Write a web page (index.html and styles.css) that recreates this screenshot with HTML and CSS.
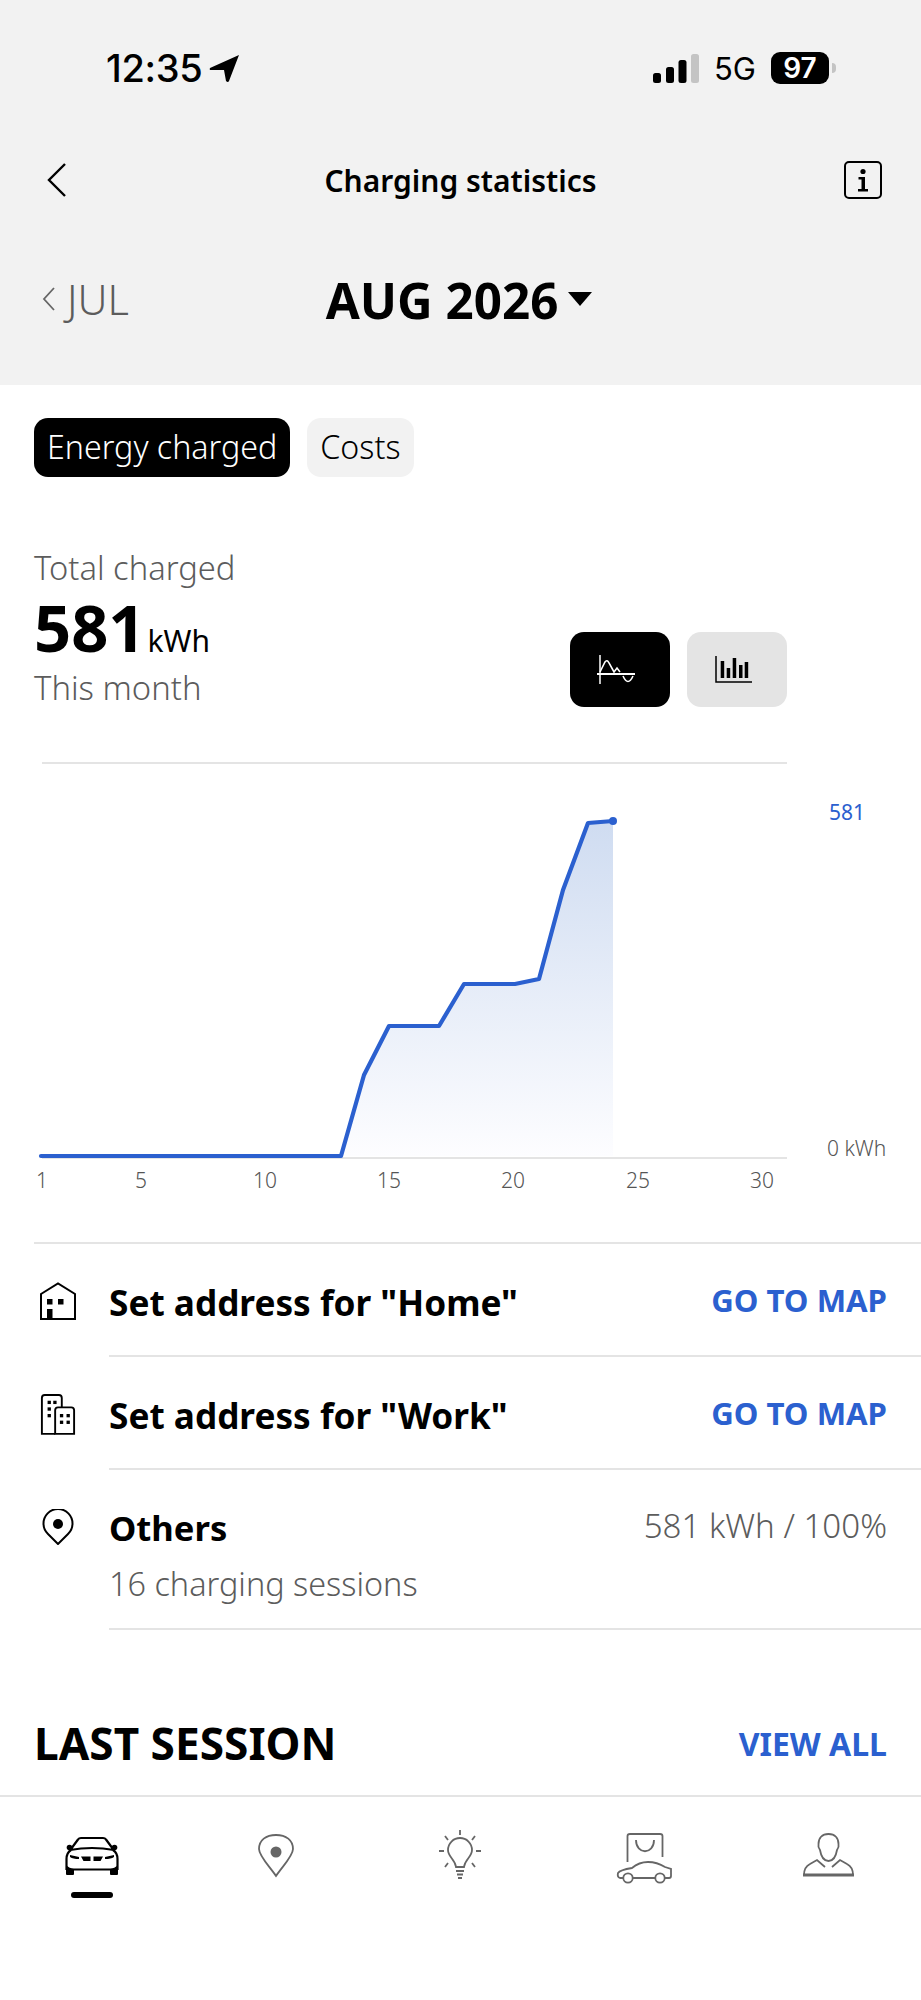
FILE: index.html
```html
<!DOCTYPE html>
<html lang="en">
<head>
    <meta charset="UTF-8">
    <title>Charging statistics</title>
    <link rel="stylesheet" href="styles.css">
</head>
<body>
    <div class="page">
        <header class="top">
            <div class="status">
                <div class="status-left">
                    <span class="time">12:35</span>
                    <svg class="arrow" width="31" height="29" viewBox="0 0 31 29"><path d="M30 1 L1 14 Q0 16 2 16 L15 16 L17 27 Q19 29 20 27 Z" fill="#000"/></svg>
                </div>
                <div class="status-right">
                    <svg width="46" height="29" viewBox="0 0 46 29">
                        <rect x="0" y="19" width="8" height="10" rx="2.500" fill="#000"/>
                        <rect x="13" y="13" width="8" height="16" rx="2.500" fill="#000"/>
                        <rect x="25.500" y="6" width="8" height="23" rx="2.500" fill="#000"/>
                        <rect x="38" y="0" width="8" height="29" rx="2.500" fill="#c4c4c4"/>
                    </svg>
                    <span class="net">5G</span>
                    <div class="battery"><span class="battery-num">97</span></div>
                    <span class="battery-nub"></span>
                </div>
            </div>
            <div class="nav">
                <svg class="back" width="20" height="34" viewBox="0 0 20 34"><path d="M18 1 L2 17 L18 33" fill="none" stroke="#000" stroke-width="2.400"/></svg>
                <h1 class="title">Charging statistics</h1>
                <svg class="info" width="38" height="38" viewBox="0 0 38 38">
                    <rect x="1" y="1" width="36" height="36" rx="4" fill="none" stroke="#000" stroke-width="2"/>
                    <circle cx="19" cy="10.500" r="2.600" fill="#000"/>
                    <path d="M14.500 16 H21 V28 H24 V30.500 H14 V28 H17.500 V18.500 H14.500 Z" fill="#000"/>
                </svg>
            </div>
            <div class="month">
                <div class="prev">
                    <svg width="13" height="24" viewBox="0 0 13 24"><path d="M12 1 L2 12 L12 23" fill="none" stroke="#666" stroke-width="1.800"/></svg>
                    <span>JUL</span>
                </div>
                <div class="current">
                    <span>AUG 2026</span>
                    <span class="caret"></span>
                </div>
            </div>
        </header>

        <div class="tabs">
            <span class="tab tab-on">Energy charged</span>
            <span class="tab">Costs</span>
        </div>

        <section class="summary">
            <div>
                <div class="sub">Total charged</div>
                <div class="total"><b>581</b><span>kWh</span></div>
                <div class="sub sub-month">This month</div>
            </div>
            <div class="toggles">
                <div class="toggle toggle-on">
                    <svg width="38" height="30" viewBox="0 0 38 30" fill="none" stroke="#fff">
                        <path d="M3 0 V29" stroke-width="1.500"/>
                        <path d="M0 19 H38" stroke-width="1.800"/>
                        <path d="M3 17 L8 7 Q10 4 12 8 L17 17 L20 13 L23 17" stroke-width="1.600"/>
                        <path d="M26 21 Q31 32 36 21" stroke-width="1.600"/>
                    </svg>
                </div>
                <div class="toggle toggle-off">
                    <svg width="37" height="27" viewBox="0 0 37 27" fill="#000">
                        <path d="M1 0 V26 H37" fill="none" stroke="#000" stroke-width="1.500"/>
                        <rect x="5.700" y="5" width="3.500" height="17"/>
                        <rect x="11.700" y="12" width="3.500" height="10"/>
                        <rect x="17.700" y="2" width="3.500" height="20"/>
                        <rect x="24" y="9" width="3.500" height="13"/>
                        <rect x="29.700" y="6" width="3.500" height="16"/>
                    </svg>
                </div>
            </div>
        </section>

        <svg class="chart" width="921" height="535" viewBox="0 707 921 535">
            <defs>
                <linearGradient id="areaFill" x1="0" y1="0" x2="0" y2="1">
                    <stop offset="0" stop-color="#cfdcf1"/>
                    <stop offset="1" stop-color="#fdfdff"/>
                </linearGradient>
            </defs>
            <line x1="42" y1="763" x2="787" y2="763" stroke="#e4e4e4" stroke-width="2"/>
            <line x1="42" y1="1158" x2="787" y2="1158" stroke="#e4e4e4" stroke-width="2"/>
            <path d="M341 1156 L364 1075 L389 1026 L439 1026 L464 984 L515 984 L539 979 L563 890 L588 823 L613 821 V1156 Z" fill="url(#areaFill)"/>
            <path d="M41 1156 H341 L364 1075 L389 1026 H439 L464 984 H515 L539 979 L563 890 L588 823 L613 821" fill="none" stroke="#2b60cf" stroke-width="4.200" stroke-linejoin="round" stroke-linecap="round"/>
            <circle cx="613" cy="821" r="4" fill="#2b60cf"/>
            <text class="chart-max" x="829" y="820">581</text>
            <text class="chart-label" x="827" y="1156">0 kWh</text>
            <g class="chart-label" text-anchor="middle">
                <text x="42" y="1188">1</text>
                <text x="141" y="1188">5</text>
                <text x="265" y="1188">10</text>
                <text x="389" y="1188">15</text>
                <text x="513" y="1188">20</text>
                <text x="638" y="1188">25</text>
                <text x="762" y="1188">30</text>
            </g>
        </svg>

        <div class="places">
            <div class="place">
                <div class="place-icon">
                    <svg width="38" height="38" viewBox="0 0 38 38">
                        <path d="M2 12 L19 1.500 L36 12 V37 H2 Z" fill="none" stroke="#000" stroke-width="2"/>
                        <rect x="8" y="17" width="5.500" height="5.500"/>
                        <rect x="19" y="17" width="5.500" height="5.500"/>
                        <rect x="8" y="27" width="5.500" height="10"/>
                    </svg>
                </div>
                <div class="place-body">
                    <span class="place-name">Set address for "Home"</span>
                    <span class="link">GO TO MAP</span>
                </div>
            </div>
            <div class="place">
                <div class="place-icon">
                    <svg width="36" height="42" viewBox="0 0 38 44" fill="none" stroke="#000" stroke-width="2">
                        <path d="M16 43 H2 V5 Q2 2 5 2 H20 Q23 2 23 5 V15"/>
                        <path d="M16 43 V18 Q16 15 19 15 H33 Q36 15 36 18 V43 Z"/>
                        <g fill="#000" stroke="none">
                            <rect x="8" y="8" width="3.500" height="3.500"/>
                            <rect x="14" y="8" width="3.500" height="3.500"/>
                            <rect x="8" y="15" width="3.500" height="3.500"/>
                            <rect x="8" y="22" width="3.500" height="3.500"/>
                            <rect x="21" y="22" width="3.500" height="3.500"/>
                            <rect x="28" y="22" width="3.500" height="3.500"/>
                            <rect x="21" y="29" width="3.500" height="3.500"/>
                            <rect x="28" y="29" width="3.500" height="3.500"/>
                        </g>
                    </svg>
                </div>
                <div class="place-body">
                    <span class="place-name">Set address for "Work"</span>
                    <span class="link">GO TO MAP</span>
                </div>
            </div>
            <div class="place place-last">
                <div class="place-icon">
                    <svg width="32" height="36" viewBox="0 0 32 36">
                        <path d="M16 35 L6 25 A14.500 14.500 0 1 1 26 25 Z" fill="none" stroke="#000" stroke-width="2"/>
                        <circle cx="16" cy="15" r="5"/>
                    </svg>
                </div>
                <div class="place-body">
                    <div>
                        <div class="place-name">Others</div>
                        <div class="place-note">16 charging sessions</div>
                    </div>
                    <span class="place-value">581 kWh / 100%</span>
                </div>
            </div>
        </div>

        <div class="last">
            <h2>LAST SESSION</h2>
            <span class="link">VIEW ALL</span>
        </div>

        <nav class="tabbar">
            <div class="tabbar-item">
                <svg width="60" height="60" viewBox="0 0 60 60">
                    <circle cx="7.500" cy="22.500" r="2.800"/>
                    <circle cx="52.500" cy="22.500" r="2.800"/>
                    <path d="M9 24 L16 14.500 Q17 13 19 13 H41 Q43 13 44 14.500 L51 24 M8 25 Q30 21 52 25" fill="none" stroke="#000" stroke-width="2.200"/>
                    <path d="M9 25 Q4.500 28 4.500 34 V45 M51 25 Q55.500 28 55.500 34 V45" fill="none" stroke="#000" stroke-width="2.200"/>
                    <path d="M4 40 Q8 44 13 43.500 H47 Q52 44 56 40 V49 Q56 50 55 50 H49 Q48 50 48 49 V45.500 H12 V49 Q12 50 11 50 H5 Q4 50 4 49 Z"/>
                    <path d="M8 30 L17 32 V34 Q11 34 8 32 Z M52 30 L43 32 V34 Q49 34 52 32 Z M19 31.500 H28.500 V36 H21.500 Z M41 31.500 H31.500 V36 H38.500 Z"/>
                </svg>
                <span class="tabbar-mark"></span>
            </div>
            <div class="tabbar-item">
                <svg width="60" height="60" viewBox="0 0 60 60">
                    <path d="M30 51 C24 42 13 31 13 24 C13 15 20 10 30 10 C40 10 47 15 47 24 C47 31 36 42 30 51 Z" fill="none" stroke="#666" stroke-width="1.800"/>
                    <circle cx="30" cy="27" r="5.500" fill="#666"/>
                </svg>
            </div>
            <div class="tabbar-item">
                <svg width="60" height="60" viewBox="0 0 60 60" fill="none" stroke="#666" stroke-width="1.800">
                    <path d="M26 42 C25 34 18 32 18 25 A12 12 0 0 1 42 25 C42 32 35 34 34 42 Z"/>
                    <path d="M26 46 H34 M27 49.500 H33 M28 53 H32"/>
                    <path d="M30 5 V10 M15 11 L18 15 M45 11 L42 15 M9 26 H14 M46 26 H51 M15 42 L18 38 M45 42 L42 38"/>
                </svg>
            </div>
            <div class="tabbar-item">
                <svg width="60" height="60" viewBox="0 0 60 60" fill="none" stroke="#666" stroke-width="1.800">
                    <path d="M12.500 37 V11 Q12.500 9 15 9 H45 Q47.500 9 47.500 11 V32"/>
                    <path d="M21 15 C21 30 39 30 39 15"/>
                    <path d="M8 53 H5 Q2 52 3 48 Q5 45 17 43 Q24 37 33 37 Q42 37 50 42 L56 44 V51 Q56 53 54 53 H50 M18 53 H40"/>
                    <circle cx="13" cy="53" r="4.700"/>
                    <circle cx="45" cy="53" r="4.700"/>
                </svg>
            </div>
            <div class="tabbar-item">
                <svg width="60" height="60" viewBox="0 0 60 60" fill="none" stroke="#666" stroke-width="1.800">
                    <path d="M29.500 9 C23 9 19.500 13 19.500 19 C19 21 19.500 23 21 25 C22 31 25 36 29.500 36 C34 36 37 31 38 25 C39.500 23 40 21 39.500 19 C39.500 13 36 9 29.500 9 Z"/>
                    <path d="M5 50 C5 44 7 41 11 39 L18 35 L26 42 M54 50 C54 44 52 41 48 39 L41 35 L33 42"/>
                    <path d="M4 50 H55" stroke-width="2.800"/>
                </svg>
            </div>
        </nav>
    </div>
</body>
</html>
```

FILE: styles.css
```css
body {
    margin: 0;
    background-color: white;
    font-family: "Noto Sans", sans-serif;
    color: #000;
}

.page {
    width: 921px;
    height: 2000px;
    overflow: hidden;
}

.top {
    height: 385px;
    background-color: #f2f2f2;
}

.status {
    display: flex;
    justify-content: space-between;
    align-items: center;
    height: 136px;
    padding: 0 92px 0 106px;
}

.status-left, .status-right {
    display: flex;
    align-items: center;
}

.time {
    font-family: Inter, sans-serif;
    font-size: 38px;
    font-weight: 500;
    letter-spacing: -0.3px;
}

.arrow {
    margin-left: 6px;
}

.net {
    font-family: Inter, sans-serif;
    font-size: 31px;
    margin: 0 15px;
}

.battery {
    width: 58px;
    height: 32px;
    background-color: #000;
    border-radius: 9px;
    text-align: center;
}

.battery-num {
    font-family: Inter, sans-serif;
    font-size: 28px;
    font-weight: 600;
    line-height: 32px;
    color: white;
}

.battery-nub {
    width: 4px;
    height: 10px;
    margin-left: 3px;
    margin-right: -7px;
    background-color: #c4c4c4;
    border-radius: 0 4px 4px 0;
}

.nav {
    display: grid;
    grid-template-columns: 1fr auto 1fr;
    align-items: center;
    height: 88px;
    padding: 0 39px;
}

.back {
    margin-left: 8px;
}

.info {
    justify-self: end;
}

.title {
    margin: 0;
    font-size: 30px;
    font-weight: 600;
}

.month {
    display: grid;
    grid-template-columns: 1fr auto 1fr;
    align-items: center;
    height: 90px;
    margin-top: 30px;
    padding: 0 42px;
}

.prev {
    display: flex;
    align-items: center;
    gap: 12px;
    font-size: 41.500px;
    font-weight: 300;
    color: #5c5c5c;
}

.current {
    display: flex;
    align-items: center;
    gap: 10px;
    margin-left: -3px;
    font-size: 49.300px;
    font-weight: 700;
}

.caret {
    width: 0;
    height: 0;
    border-left: 12px solid transparent;
    border-right: 12px solid transparent;
    border-top: 14px solid #000;
}

.tabs {
    display: flex;
    gap: 17px;
    margin-top: 33px;
    padding-left: 34px;
}

.tab {
    height: 59px;
    padding: 0 13px;
    background-color: #f2f2f2;
    border-radius: 14px;
    font-size: 32.200px;
    font-weight: 300;
    line-height: 57px;
}

.tab-on {
    background-color: #000;
    color: white;
}

.summary {
    display: flex;
    justify-content: space-between;
    align-items: flex-end;
    margin-top: 71px;
    padding: 0 134px 0 34px;
}

.sub {
    font-size: 32.700px;
    font-weight: 300;
    line-height: 40px;
    color: #5c5c5c;
}

.sub-month {
    font-size: 32.800px;
    line-height: 39px;
}

.total {
    height: 80px;
    line-height: 78px;
}

.total b {
    display: inline-block;
    font-size: 65px;
    font-weight: 700;
    line-height: 78px;
}

.total span {
    margin-left: 2px;
    font-size: 30px;
    font-weight: 400;
}

.toggles {
    display: flex;
    gap: 17px;
}

.toggle {
    display: flex;
    align-items: center;
    justify-content: center;
    width: 100px;
    height: 75px;
    border-radius: 14px;
}

.toggle svg {
    margin-right: 8px;
}

.toggle-on {
    background-color: #000;
}

.toggle-off {
    background-color: #e4e4e4;
}

.chart {
    display: block;
}

.chart-max {
    font-size: 21px;
    fill: #2b60cf;
}

.chart-label {
    font-size: 21px;
    font-weight: 300;
    fill: #555;
}

.places {
    margin-left: 34px;
    border-top: 2px solid #e4e4e4;
}

.place {
    display: flex;
    height: 113px;
}

.place-last {
    height: 160px;
}

.place-icon {
    display: flex;
    align-items: center;
    justify-content: center;
    flex: none;
    width: 48px;
    margin-right: 27px;
    height: 113px;
}

.place-body {
    display: flex;
    flex: 1;
    justify-content: space-between;
    align-items: center;
    padding-right: 34px;
    border-bottom: 2px solid #e4e4e4;
}

.place-last .place-body {
    align-items: flex-start;
    padding-top: 34px;
}

.place-name {
    margin-top: 4px;
    font-size: 35.200px;
    font-weight: 700;
}

.place-last .place-name {
    margin-top: 0;
    font-size: 34.600px;
}

.place-note {
    margin-top: 10px;
    font-size: 32.400px;
    font-weight: 300;
    color: #5c5c5c;
}

.place-value {
    margin-top: -1px;
    font-size: 33.100px;
    font-weight: 300;
    color: #5c5c5c;
}

.link {
    font-size: 31.200px;
    font-weight: 700;
    color: #2b60cf;
}

.last {
    display: flex;
    justify-content: space-between;
    align-items: center;
    height: 70px;
    margin-top: 78px;
    padding: 0 34px;
}

.last h2 {
    margin: 0;
    font-size: 44.200px;
    font-weight: 700;
}

.last .link {
    font-size: 32px;
}

.tabbar {
    display: grid;
    grid-template-columns: repeat(5, 1fr);
    margin-top: 17px;
    padding-top: 28px;
    border-top: 2px solid #e4e4e4;
}

.tabbar-item {
    display: flex;
    flex-direction: column;
    align-items: center;
}

.tabbar-mark {
    width: 42px;
    height: 6px;
    margin-top: 7px;
    background-color: #000;
    border-radius: 3px;
}
```
